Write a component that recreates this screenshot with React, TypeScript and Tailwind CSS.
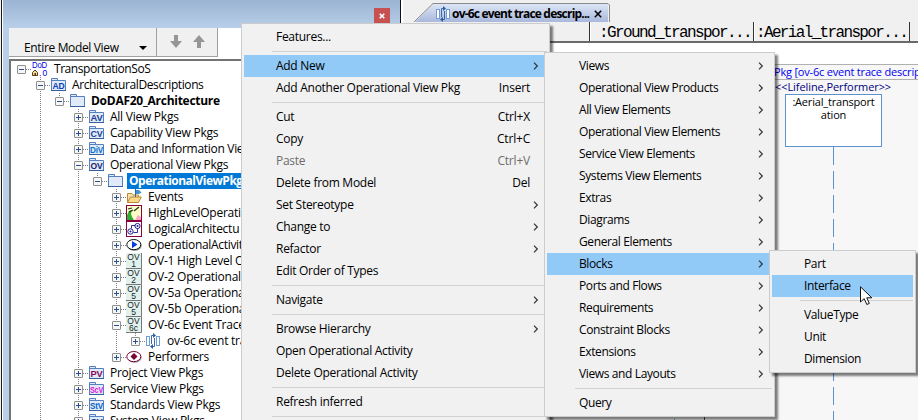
import React from 'react';

type Entry = { label: string; keys?: string; sub?: boolean; on?: boolean; off?: boolean } | null;

const mainMenu: Entry[] = [
  { label: 'Features...' },
  null,
  { label: 'Add New', sub: true, on: true },
  { label: 'Add Another Operational View Pkg', keys: 'Insert' },
  null,
  { label: 'Cut', keys: 'Ctrl+X' },
  { label: 'Copy', keys: 'Ctrl+C' },
  { label: 'Paste', keys: 'Ctrl+V', off: true },
  { label: 'Delete from Model', keys: 'Del' },
  { label: 'Set Stereotype', sub: true },
  { label: 'Change to', sub: true },
  { label: 'Refactor', sub: true },
  { label: 'Edit Order of Types' },
  null,
  { label: 'Navigate', sub: true },
  null,
  { label: 'Browse Hierarchy', sub: true },
  { label: 'Open Operational Activity' },
  { label: 'Delete Operational Activity' },
  null,
  { label: 'Refresh inferred' },
  null,
];

const addMenu: Entry[] = [
  { label: 'Views', sub: true },
  { label: 'Operational View Products', sub: true },
  { label: 'All View Elements', sub: true },
  { label: 'Operational View Elements', sub: true },
  { label: 'Service View Elements', sub: true },
  { label: 'Systems View Elements', sub: true },
  { label: 'Extras', sub: true },
  { label: 'Diagrams', sub: true },
  { label: 'General Elements', sub: true },
  { label: 'Blocks', sub: true, on: true },
  { label: 'Ports and Flows', sub: true },
  { label: 'Requirements', sub: true },
  { label: 'Constraint Blocks', sub: true },
  { label: 'Extensions', sub: true },
  { label: 'Views and Layouts', sub: true },
  null,
  { label: 'Query' },
];

const blockMenu: Entry[] = [
  { label: 'Part' },
  { label: 'Interface', on: true },
  null,
  { label: 'ValueType' },
  { label: 'Unit' },
  { label: 'Dimension' },
];

function Menu({ items, className }: { items: Entry[]; className: string }) {
  return (
    <div className={`absolute border border-[#ccc] bg-[#f1f1f1] p-[2px] shadow-[3px_3px_2px_rgba(0,0,0,0.5)] ${className}`}>
      {items.map((it, i) =>
        it === null ? (
          <div key={i} className="flex h-[7px] items-center pl-[28px]">
            <div className="h-px w-full bg-[#d2d2d2]" />
          </div>
        ) : (
          <div
            key={i}
            className={`flex h-[22px] items-center pl-[32px] ${it.on ? 'bg-[#91c9f7]' : ''} ${it.off ? 'text-[#6d6d6d]' : 'text-black'}`}
          >
            <span className="flex-1">{it.label}</span>
            {it.keys && <span className="mr-[17px] tracking-[-0.2px]">{it.keys}</span>}
            {it.sub && (
              <svg width="6" height="8" viewBox="0 0 6 8" className="mr-[8px]">
                <path d="M1 0.7 L4.3 4 L1 7.3" fill="none" stroke="#333" strokeWidth="1.2" />
              </svg>
            )}
          </div>
        ),
      )}
    </div>
  );
}

function Folder({ text, color = '#1c3f94', wide }: { text?: string; color?: string; wide?: boolean }) {
  return (
    <svg width="17" height="16" viewBox="0 0 17 16">
      <path d="M1.5 13.5 V1.5 H7.5 V3.5 H15.5 V13.5 Z" fill="#e0eaf8" stroke="#5580bd" />
      <path d="M2 3.5 H15" stroke="#5580bd" />
      <path d="M1 13.5 H16" stroke="#34609f" />
      {text && (
        <text
          x="8.5"
          y="12.2"
          textAnchor="middle"
          fontSize="9"
          fontWeight="bold"
          fontFamily="Liberation Sans, sans-serif"
          fill={color}
          textLength={wide ? 13 : 12}
          lengthAdjust="spacingAndGlyphs"
        >
          {text}
        </text>
      )}
    </svg>
  );
}

function OvBox({ text }: { text: string }) {
  return (
    <svg width="16" height="16" viewBox="0 0 16 16" fontFamily="Liberation Sans, sans-serif" letterSpacing="0">
      <rect width="16" height="16" fill="#e0f2ee" />
      <path d="M15.5 0 V15.5 H0" fill="none" stroke="#777" />
      <text x="7.5" y="7" textAnchor="middle" fontSize="8.5" fill="#222">OV</text>
      <text x="7.5" y="14.4" textAnchor="middle" fontSize="8.5" fill="#222">{text}</text>
    </svg>
  );
}

function TraceIcon() {
  return (
    <svg width="16" height="16" viewBox="0 0 16 16" fill="none" className="shrink-0">
      <rect x="1.5" y="3.5" width="3" height="9" fill="#fff" stroke="#6f9cd8" />
      <rect x="11.5" y="3.5" width="3" height="9" fill="#fff" stroke="#6f9cd8" />
      <path d="M6.5 11 V2.5 H9 M9.5 5 V13.5 H7" stroke="#3b6ba8" />
      <path d="M8 0 L11 2.5 L8 5 Z M8 11 L5 13.5 L8 16 Z" fill="#2d5f9e" />
    </svg>
  );
}

function RootIcon() {
  return (
    <svg width="17" height="16" viewBox="0 0 17 16" fontFamily="Liberation Sans, sans-serif" fill="#0000e0">
      <text x="1" y="6.5" fontSize="8.5" textLength="15" lengthAdjust="spacingAndGlyphs">DoD</text>
      <text x="8" y="15" fontSize="8.5" textLength="8">.0</text>
      <path d="M1.5 11.5 L4 9 L6.5 11.5 V14.5 H1.5 Z" fill="#f4d9a0" stroke="#5a3a10" />
      <rect x="3.5" y="12" width="1.5" height="2" fill="#5a3a10" />
    </svg>
  );
}

function EventsIcon() {
  return (
    <svg width="16" height="16" viewBox="0 0 16 16">
      <path d="M1.5 13.5 V4.5 H6 L7 6 H12.5 V8" fill="#f8e2a8" stroke="#b98a3a" />
      <path d="M1.5 13.5 L4.5 8 H15.3 L12.5 13.5 Z" fill="#fbd88a" stroke="#b98a3a" />
      <path d="M9.5 8 V0" stroke="#2a6a9a" />
      <path d="M10 1 H13 L15.5 3.5 L13 5 H10 Z" fill="#3f93cf" />
    </svg>
  );
}

function HighLevelIcon() {
  return (
    <svg width="16" height="16" viewBox="0 0 16 16">
      <rect x="0.5" y="0.5" width="15" height="15" fill="#ffffc8" stroke="#8a0045" />
      <path d="M1 15 V10 L3 6 L6 5 L5 9 L6 12 L8 15 Z" fill="#2fae2f" />
      <path d="M2 4 L6 3 M3 7 L7 5 M8 6 L13 2" stroke="#203020" strokeWidth="1.2" />
      <path d="M9 15 L12 10 L15 12 V15 Z" fill="#ffa8c8" />
    </svg>
  );
}

function LogicalIcon() {
  return (
    <svg width="16" height="16" viewBox="0 0 16 16" fill="none" stroke="#1a1a8c">
      <rect x="0.5" y="0.5" width="15" height="15" fill="#fff" stroke="#8a0045" />
      <circle cx="4.5" cy="10.5" r="2.7" />
      <circle cx="11.5" cy="5" r="2.6" />
      <path d="M3.5 10.5 H5.5 M4.5 9.5 V11.5 M10.5 5 H12.5 M11.5 4 V6 M5.5 7.5 V4.5 H9 M7.5 11.5 H11.5 V7.5" strokeWidth="0.9" />
    </svg>
  );
}

function ActivityIcon() {
  return (
    <svg width="16" height="16" viewBox="0 0 16 16">
      <ellipse cx="8.5" cy="8.5" rx="7.2" ry="5.3" fill="#888" />
      <ellipse cx="7.8" cy="7.6" rx="7" ry="5.1" fill="#fff" stroke="#111" />
      <path d="M6 4 L11.5 7.6 L6 11.2 Z" fill="#0a3be0" />
    </svg>
  );
}

function PerformersIcon() {
  return (
    <svg width="16" height="16" viewBox="0 0 16 16">
      <ellipse cx="8.5" cy="8.5" rx="7.2" ry="5.3" fill="#aaa" />
      <ellipse cx="7.8" cy="7.6" rx="7" ry="5.1" fill="#fff" stroke="#7a0038" />
      <path d="M8 4 L11.5 7.5 L8 11 L4.5 7.5 Z" fill="#7a0038" />
    </svg>
  );
}

type Node = {
  depth: number;
  guides: number[];
  open?: boolean;
  last?: boolean;
  first?: boolean;
  icon: React.ReactNode;
  label: string;
  style?: string;
};

const tree: Node[] = [
  { depth: 0, guides: [], open: true, first: true, last: true, icon: <RootIcon />, label: 'TransportationSoS', style: 'tracking-[-0.45px] pl-px' },
  { depth: 1, guides: [], open: true, icon: <Folder text="AD" color="#0a3fb5" />, label: 'ArchitecturalDescriptions', style: 'tracking-[-0.4px]' },
  { depth: 2, guides: [1], open: true, last: true, icon: <Folder />, label: 'DoDAF20_Architecture', style: 'font-bold tracking-[-0.27px]' },
  { depth: 3, guides: [1], icon: <Folder text="AV" />, label: 'All View Pkgs' },
  { depth: 3, guides: [1], icon: <Folder text="CV" />, label: 'Capability View Pkgs' },
  { depth: 3, guides: [1], icon: <Folder text="DiV" color="#0a74c8" wide />, label: 'Data and Information Vie', style: 'tracking-[-0.3px]' },
  { depth: 3, guides: [1], open: true, icon: <Folder text="OV" color="#1a2368" />, label: 'Operational View Pkgs', style: 'tracking-[-0.32px]' },
  {
    depth: 4, guides: [1, 3], open: true, last: true, icon: <Folder />, label: 'OperationalViewPkg',
    style: 'font-bold tracking-[-0.5px] bg-[#0078d7] text-white h-4 -ml-[2px] pl-[2px] pr-1',
  },
  { depth: 5, guides: [1, 3], icon: <EventsIcon />, label: 'Events' },
  { depth: 5, guides: [1, 3], icon: <HighLevelIcon />, label: 'HighLevelOperati' },
  { depth: 5, guides: [1, 3], icon: <LogicalIcon />, label: 'LogicalArchitectu' },
  { depth: 5, guides: [1, 3], icon: <ActivityIcon />, label: 'OperationalActivit', style: 'tracking-[-0.32px]' },
  { depth: 5, guides: [1, 3], icon: <OvBox text="1" />, label: 'OV-1 High Level O' },
  { depth: 5, guides: [1, 3], icon: <OvBox text="2" />, label: 'OV-2 Operational' },
  { depth: 5, guides: [1, 3], icon: <OvBox text="5" />, label: 'OV-5a Operationa' },
  { depth: 5, guides: [1, 3], icon: <OvBox text="5" />, label: 'OV-5b Operationa' },
  { depth: 5, guides: [1, 3], open: true, icon: <OvBox text="6c" />, label: 'OV-6c Event Trace' },
  { depth: 6, guides: [1, 3, 5], last: true, icon: <TraceIcon />, label: 'ov-6c event tra' },
  { depth: 5, guides: [1, 3], last: true, icon: <PerformersIcon />, label: 'Performers' },
  { depth: 3, guides: [1], icon: <Folder text="PV" color="#8a0a5a" />, label: 'Project View Pkgs' },
  { depth: 3, guides: [1], icon: <Folder text="ScV" color="#e010e0" wide />, label: 'Service View Pkgs' },
  { depth: 3, guides: [1], icon: <Folder text="StV" color="#0a64c8" wide />, label: 'Standards View Pkgs' },
  { depth: 3, guides: [1], icon: <Folder text="SV" />, label: 'System View Pkgs' },
];

const dots = { stroke: '#808080', strokeDasharray: '1 1' };

function TreeRow({ node }: { node: Node }) {
  const cells = Array.from({ length: node.depth }, (_, i) => i);
  return (
    <div className="flex h-4 items-center whitespace-nowrap">
      {cells.map((c) => (
        <svg key={c} width="19" height="16" className="shrink-0">
          {node.guides.includes(c) && <path d="M9.5 0 V16" {...dots} />}
        </svg>
      ))}
      <svg width="19" height="16" className="shrink-0">
        {!node.first && <path d="M9.5 0 V4" {...dots} />}
        {!node.last && <path d="M9.5 12 V16" {...dots} />}
        <path d="M14 8.5 H19" {...dots} />
        <rect x="5.5" y="4.5" width="8" height="8" rx="0.5" fill="#f6f6f6" stroke="#8e8f8f" />
        <path d="M7 8.5 H12" stroke="#2c4f8f" />
        {!node.open && <path d="M9.5 6 V11" stroke="#2c4f8f" />}
      </svg>
      <span className="mr-[6px] w-4 shrink-0">{node.icon}</span>
      <span className={`leading-4 ${node.style ?? 'tracking-[-0.25px]'}`}>{node.label}</span>
    </div>
  );
}

function ModelBrowser() {
  return (
    <div className="flex w-[401px] shrink-0 border-r border-[#111] bg-[#f0f0f0]">
      <div className="w-px bg-[#f0f0f0]" />
      <div className="w-px bg-[#1a1a1a]" />
      <div className="w-px bg-white" />
      <div className="flex flex-1 flex-col bg-[#b9cfe9]">
        <div className="flex h-7 shrink-0 justify-end bg-linear-to-b from-[#9ab4d2] to-[#b9cfe9] pt-2 pr-[10px]">
          <div className="flex h-[15px] w-4 items-center justify-center bg-[#c75050]">
            <svg width="6" height="6" viewBox="0 0 6 6">
              <path d="M0.7 0.7 L5.3 5.3 M5.3 0.7 L0.7 5.3" stroke="#fff" strokeWidth="1.6" />
            </svg>
          </div>
        </div>
        <div className="ml-[6px] flex flex-1 flex-col overflow-hidden bg-white">
          <div className="flex h-[29px] shrink-0">
            <div className="flex w-[148px] items-center justify-between border-r border-b border-[#a0a0a0] bg-[#f0f0f0] pt-[11px] pr-[9px] pl-[15px]">
              <span className="tracking-[-0.35px]">Entire Model View</span>
              <span className="border-x-[4px] border-t-[4px] border-x-transparent border-t-black" />
            </div>
            <div className="flex w-[61px] items-start gap-[11px] border-r border-b border-[#a0a0a0] bg-[#f0f0f0] pt-[7px] pl-[13px]">
              <svg width="12" height="13" viewBox="0 0 12 13"><path d="M4 0 H8 V6 H12 L6 13 L0 6 H4 Z" fill="#969696" /></svg>
              <svg width="12" height="13" viewBox="0 0 12 13"><path d="M4 13 H8 V7 H12 L6 0 L0 7 H4 Z" fill="#969696" /></svg>
            </div>
          </div>
          <div className="mt-[2px] flex-1 border-t-2 border-l-2 border-[#747474] bg-white pl-px">
            {tree.map((n, i) => (
              <TreeRow key={i} node={n} />
            ))}
          </div>
        </div>
      </div>
    </div>
  );
}

function Diagram() {
  return (
    <div className="flex flex-1 flex-col overflow-hidden border-l-2 border-white bg-[#f0f0f0]">
      <div className="relative h-[22px] shrink-0">
        <svg width="515" height="22" className="absolute inset-0">
          <defs>
            <linearGradient id="tab" x1="0" y1="0" x2="0" y2="1">
              <stop offset="0" stopColor="#dde6f6" />
              <stop offset="1" stopColor="#a9b9dc" />
            </linearGradient>
          </defs>
          <path d="M12 22 L30 4 H205 V22 Z" fill="url(#tab)" />
          <path d="M11 22 L30 3.5 H205 L206.5 5 V22" fill="none" stroke="#8a8a8a" />
        </svg>
        <div className="relative flex h-[22px] items-center pt-[6px] pl-[32px]">
          <TraceIcon />
          <span className="ml-px w-[140px] shrink-0 whitespace-nowrap font-bold tracking-[-0.8px]">ov-6c event trace descrip...</span>
          <svg width="8" height="8" viewBox="0 0 8 8" className="ml-[2px] shrink-0">
            <path d="M0.8 0.8 L7.2 7.2 M7.2 0.8 L0.8 7.2" stroke="#000" strokeWidth="1.5" />
          </svg>
        </div>
      </div>
      <div className="flex h-[21px] shrink-0 border-b-2 border-[#6a6a6a] font-['Liberation_Mono',monospace] text-[16px] leading-[22px] tracking-[-1.6px] whitespace-nowrap text-black">
        <div className="w-[187px] border-r border-[#333]" />
        <div className="w-[164px] border-r border-l border-r-[#333] border-l-white pl-[8px]">:Ground_transpor...</div>
        <div className="w-[156px] border-r border-l border-r-[#333] border-l-white pl-px tracking-[-1.65px]">:Aerial_transpor...</div>
      </div>
      <div className="h-[21px] shrink-0 bg-white" />
      <div className="flex flex-1 flex-col border-t border-[#b0b0b0] bg-[#f7f7f7]">
        <div className="flex h-[15px] shrink-0 items-center border-b border-[#b0b0b0] pb-px pl-[371px] text-[11px] tracking-[-0.2px] whitespace-nowrap text-[#0000f0]">
          Pkg [ov-6c event trace descrip
        </div>
        <div className="pl-[372px] text-[11px] leading-[14px] tracking-[-0.08px] whitespace-nowrap text-[#000080]">&lt;&lt;Lifeline,Performer&gt;&gt;</div>
        <div className="flex flex-1">
          <div className="w-[272px] border-r border-dashed border-[#6b9bd0]" />
          <div className="w-[30px] border-r border-[#444]" />
          <div className="ml-[80px] flex w-[97px] flex-col items-center">
            <div className="h-[53px] w-full border border-[#5b92cf] bg-white px-1 text-center text-[11px] leading-[13px] tracking-[-0.18px] text-black">
              :Aerial_transport
              <br />
              ation
            </div>
            <svg width="1" height="280">
              <path d="M0.5 0 V280" stroke="#5b92cf" strokeDasharray="18 6" />
            </svg>
          </div>
        </div>
      </div>
    </div>
  );
}

export default function App() {
  return (
    <div className="relative flex h-[420px] w-[918px] overflow-hidden bg-[#f0f0f0] font-['Open_Sans','Noto_Sans',sans-serif] text-[12px] leading-4 tracking-[-0.2px] text-black">
      <ModelBrowser />
      <Diagram />
      <Menu items={mainMenu} className="top-[23px] left-[241px] h-[420px] w-[309px] tracking-[-0.28px]" />
      <Menu items={addMenu} className="top-[52px] left-[544px] w-[231px] tracking-[-0.38px]" />
      <Menu items={blockMenu} className="top-[250px] left-[769px] w-[147px] tracking-[-0.35px]" />
      <svg width="13" height="20" viewBox="0 0 13 20" className="absolute top-[286px] left-[860px]">
        <path d="M0.5 0.8 V16 L4.2 12.6 L6.8 18.5 L9.3 17.4 L6.8 11.8 H11.8 Z" fill="#fff" stroke="#111" />
      </svg>
    </div>
  );
}
